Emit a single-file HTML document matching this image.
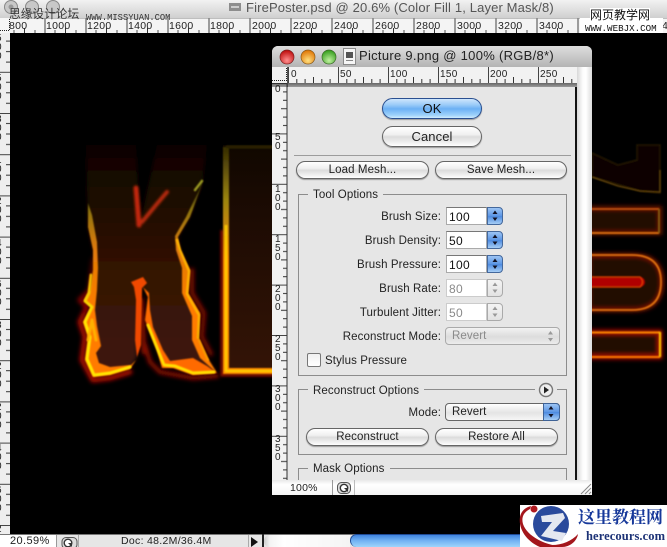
<!DOCTYPE html>
<html><head><meta charset="utf-8">
<style>
html,body{margin:0;padding:0;background:#000}
#p{position:relative;width:667px;height:547px;overflow:hidden;background:#000;font-family:"Liberation Sans","Noto Sans CJK SC",sans-serif;color:#222;font-size:11.5px}
#p div,#p span.a{position:absolute;box-sizing:border-box}
.t{white-space:nowrap;letter-spacing:.1px;line-height:14px}
.r{text-align:right;left:290px;width:151px}
.btn{border:1px solid #666;border-radius:10px;background:linear-gradient(#fff 0,#f0f0f0 40%,#dcdcdc 52%,#f2f2f2 85%,#fff 100%);text-align:center;letter-spacing:.1px;color:#222;box-shadow:0 1px 1px #999;padding-top:1px}
.inp{left:446px;width:41px;height:18px;background:#fff;border:1px solid #aaa;border-top-color:#777;padding-left:2px;line-height:18px;font-size:12px;letter-spacing:.3px;color:#111}
.sp{left:487px;width:16px;height:18px;border-radius:0 4px 4px 0;border:1px solid #44689c;background:linear-gradient(#9cc4f4,#5c96e4 50%,#4c8ae0 52%,#a6cdf5);color:#123;}
.sp.d{border-color:#aaa;background:linear-gradient(#f4f4f4,#e2e2e2)}
.box{left:298px;width:269px;border:1px solid #8c8c8c}
.leg{background:#e6e6e6;padding:0 5px;height:14px;line-height:14px;letter-spacing:.1px;white-space:nowrap}
svg{position:absolute;overflow:visible}
</style></head><body><div id="p">

<!-- canvas artwork -->
<svg style="left:0;top:0" width="667" height="547" viewBox="0 0 667 547">
<defs>
<filter id="b05" filterUnits="userSpaceOnUse" x="0" y="0" width="667" height="547"><feGaussianBlur stdDeviation=".8"/></filter>
<filter id="b1" filterUnits="userSpaceOnUse" x="0" y="0" width="667" height="547"><feGaussianBlur stdDeviation="1.2"/></filter>
<filter id="b2" filterUnits="userSpaceOnUse" x="0" y="0" width="667" height="547"><feGaussianBlur stdDeviation="2.2"/></filter>
<linearGradient id="body" gradientUnits="userSpaceOnUse" x1="0" y1="145" x2="0" y2="375"><stop offset="0" stop-color="#0e0401"/><stop offset=".25" stop-color="#1e0a03"/><stop offset=".55" stop-color="#341306"/><stop offset="1" stop-color="#401808"/></linearGradient>
<linearGradient id="fl" gradientUnits="userSpaceOnUse" x1="0" y1="175" x2="0" y2="310"><stop offset="0" stop-color="#6a5a08" stop-opacity="0"/><stop offset=".25" stop-color="#8a7410"/><stop offset=".55" stop-color="#e07a08"/><stop offset="1" stop-color="#ff7c00"/></linearGradient>
<linearGradient id="yl" gradientUnits="userSpaceOnUse" x1="0" y1="225" x2="0" y2="320"><stop offset="0" stop-color="#c8a000" stop-opacity="0"/><stop offset=".5" stop-color="#f0b000"/><stop offset="1" stop-color="#ffe800"/></linearGradient>
<linearGradient id="rd" gradientUnits="userSpaceOnUse" x1="0" y1="230" x2="0" y2="320"><stop offset="0" stop-color="#700" stop-opacity="0"/><stop offset="1" stop-color="#b00800"/></linearGradient>
<linearGradient id="il" gradientUnits="userSpaceOnUse" x1="0" y1="150" x2="0" y2="260"><stop offset="0" stop-color="#3a3004"/><stop offset=".45" stop-color="#9a8410"/><stop offset="1" stop-color="#ff8c00"/></linearGradient>
<linearGradient id="ibody" gradientUnits="userSpaceOnUse" x1="0" y1="145" x2="0" y2="373"><stop offset="0" stop-color="#100700"/><stop offset=".3" stop-color="#1c0b03"/><stop offset="1" stop-color="#341406"/></linearGradient>
<pattern id="tickH" width="41" height="15" patternUnits="userSpaceOnUse" x="3.5" y="18"><rect x="0" y="0" width="1" height="15" fill="#444"/><rect x="20.5" y="10" width="1" height="5" fill="#333"/><rect x="10" y="12" width="1" height="3" fill="#555"/><rect x="31" y="12" width="1" height="3" fill="#555"/></pattern>
<pattern id="tickV" width="10" height="41.2" patternUnits="userSpaceOnUse" x="0" y="30.6"><rect x="0" y="0" width="10" height="1" fill="#444"/><rect x="6" y="10" width="4" height="1" fill="#333"/><rect x="6" y="20.5" width="4" height="1" fill="#333"/><rect x="6" y="31" width="4" height="1" fill="#333"/></pattern>
<pattern id="tickD" width="50" height="16" patternUnits="userSpaceOnUse" x="288" y="67"><rect x="0" y="0" width="1" height="16" fill="#444"/><rect x="8.3" y="12" width="1" height="4" fill="#333"/><rect x="16.6" y="12" width="1" height="4" fill="#333"/><rect x="25" y="10" width="1" height="6" fill="#333"/><rect x="33.3" y="12" width="1" height="4" fill="#333"/><rect x="41.6" y="12" width="1" height="4" fill="#333"/></pattern>
<pattern id="tickE" width="15" height="50.4" patternUnits="userSpaceOnUse" x="272" y="83"><rect x="0" y="0" width="15" height="1" fill="#444"/><rect x="11" y="8.4" width="4" height="1" fill="#333"/><rect x="11" y="16.8" width="4" height="1" fill="#333"/><rect x="9" y="25.2" width="6" height="1" fill="#333"/><rect x="11" y="33.6" width="4" height="1" fill="#333"/><rect x="11" y="42" width="4" height="1" fill="#333"/></pattern>
</defs>

<!-- K body -->
<path d="M86 145 L136 145 L140 225 L157 145 L207 145 L202 185 L190 217 L178 237 L180 250 L190 270 L188 293 L200 313 L198 337 L207 357 L217 373 L193 375 L173 368 L162 368 L157 350 L145 320 L148 297 L143 287 L140 285 L138 297 L137 357 L130 369 L110 375 L93 377 L85 360 L88 337 L83 322 L91 307 L84 300 L90 290 L93 270 L93 250 L88 227 Z" fill="url(#body)" filter="url(#b2)"/>

<!-- K outer red halo -->
<g fill="none" stroke-linejoin="round" stroke-linecap="round" filter="url(#b2)">
<path d="M93 260 L90 290 L80 300 L87 307 L80 322 L85 337 L82 360 L93 380 L110 378 L130 372" stroke="url(#rd)" stroke-width="5"/>
<path d="M145 345 L150 362 L160 372 L193 378 L217 376" stroke="#900800" stroke-width="4"/>
<path d="M192 270 L192 293 L204 313 L202 337 L211 354" stroke="#8a0800" stroke-width="4"/>
<path d="M141 300 L144 352" stroke="#8a0800" stroke-width="5"/>
</g>

<!-- K flames as filled shapes -->
<g filter="url(#b05)">
<path d="M88 203 L88 227 L93 250 L93 270 L90 290 L84 300 L91 307 L83 322 L88 337 L85 360 L93 377 L110 375 L130 369 L136 360 L131 365 L110 367 L99 363 L96 353 L101 346 L97 326 L95 310 L97 290 L98 268 L97 242 L92 215 Z" fill="url(#fl)"/>
<path d="M131 282 L143 277 L147 283 L142 288 L141 345 L137 357 L135 340 L136 300 L134 287 Z" fill="#f04a00"/>
<path d="M143 287 L148 297 L145 320 L157 350 L162 368 L173 368 L193 375 L217 373 L207 366 L193 358 L170 361 L163 350 L153 327 L150 310 L149 293 Z" fill="#ff6a00"/>
<path d="M217 373 L207 357 L198 337 L200 313 L188 293 L190 270 L180 250 L178 237 L190 217 L202 185 L207 160 L199 190 L186 217 L175 236 L176 250 L182 268 L182 293 L192 316 L192 340 L200 358 Z" fill="url(#fl)"/>
</g>
<!-- K yellow cores -->
<g fill="none" stroke-linejoin="round" stroke-linecap="round" filter="url(#b05)">
<path d="M91 275 L89 293 L85 301 L92 307 L85 322 L90 337 L87 359 L94 375 L110 373 L130 367" stroke="url(#yl)" stroke-width="3"/>
<path d="M88 340 L92 320 L96 340" stroke="#ffb000" stroke-width="3"/>
<path d="M148 325 L158 350 L164 365 L175 366 L193 373 L214 372" stroke="#ffe000" stroke-width="3"/>
<path d="M198 338 L199 315 L187 294 L189 271 L180 250 L177 240" stroke="#ffb400" stroke-width="2.400"/>
<path d="M199 340 L208 360" stroke="#ffa000" stroke-width="2"/>
<path d="M195 190 L202 181" stroke="#9a9a20" stroke-width="2.500"/>
</g>
<!-- V notch -->
<g fill="none" stroke-linecap="round" filter="url(#b1)">
<path d="M136 188 L139 225" stroke="#c42808" stroke-width="5"/>
<path d="M142 222 L156 205 L167 192" stroke="#b82a0a" stroke-width="4"/>
</g>

<!-- I letter -->
<rect x="223" y="145" width="52" height="228" fill="url(#ibody)"/>
<g fill="none">
<path d="M222 230 L222 375 L275 375" stroke="#8a0800" stroke-width="3" filter="url(#b1)"/>
<path d="M226 147 L226 371 L275 371" stroke="url(#il)" stroke-width="6" filter="url(#b05)"/>
<path d="M226 225 L226 371 L275 371" stroke="#ffd400" stroke-width="2.500" filter="url(#b05)" opacity=".9"/>
<path d="M226 147 L275 147" stroke="#2c2404" stroke-width="3" filter="url(#b05)"/>
</g>

<!-- right letters -->
<g fill="none">
<path d="M592 153 L618 165 L637 160 L637 145 L660 145 L660 193 L640 191 L592 177 Z" fill="#0d0602" stroke="#241804" stroke-width="1.500" filter="url(#b05)"/>
<path d="M592 177 L618 186 L640 191 L660 192 L660 170" stroke="#6a4a08" stroke-width="1.200" filter="url(#b05)"/>
<path d="M588 208 L660 208 L660 233 L588 233" fill="#210b02" stroke="#6a1400" stroke-width="4" filter="url(#b2)"/>
<path d="M588 209 L659 209" stroke="#c8580c" stroke-width="1.800" filter="url(#b05)"/>
<path d="M588 233 L659 233" stroke="#ea7a0c" stroke-width="1.800" filter="url(#b05)"/>
<path d="M659 209 L659 233" stroke="#8a6a10" stroke-width="1.600" filter="url(#b05)"/>
<path d="M588 255 L632 255 Q662 255 662 282 Q662 310 632 310 L588 310 Z" fill="#240c02" stroke="#7a1400" stroke-width="4" filter="url(#b2)"/>
<path d="M588 255 L632 255 Q661 255 661 282 Q661 310 632 310 L588 310" stroke="#e87810" stroke-width="1.800" filter="url(#b05)"/>
<path d="M588 282 L640 282" stroke="#b00600" stroke-width="10" stroke-linecap="round" filter="url(#b05)"/>
<path d="M588 277 L640 277 Q645 282 640 287 L588 287" stroke="#e04800" stroke-width="1.200" filter="url(#b05)"/>
<path d="M588 332 L660 332 L660 357 L588 357" fill="#240c02" stroke="#a01000" stroke-width="5" filter="url(#b2)"/>
<path d="M588 332.500 L660 332.500" stroke="#ff8a00" stroke-width="2" filter="url(#b05)"/>
<path d="M588 357 L660 357" stroke="#ff7c00" stroke-width="2" filter="url(#b05)"/>
<path d="M660 332 L660 357" stroke="#ffc800" stroke-width="2.200" filter="url(#b05)"/>
</g>

<!-- main rulers -->
<rect x="0" y="18" width="667" height="15" fill="#f4f4f4"/>
<rect x="0" y="18" width="667" height="15" fill="url(#tickH)"/>
<rect x="0" y="17.500" width="667" height="1" fill="#888"/>
<rect x="0" y="33" width="10" height="501" fill="#eee"/>
<rect x="0" y="33" width="10" height="501" fill="url(#tickV)"/>
<rect x="0" y="18" width="10" height="15" fill="#f6f6f6"/>
<path d="M0 30.500H9.500V19" stroke="#222" stroke-dasharray="1 1" fill="none"/>
<g font-family="Liberation Sans" font-size="10.500" fill="#222" letter-spacing=".3">
<text x="9" y="29">800</text><text x="46" y="29">1000</text><text x="87" y="29">1200</text><text x="128" y="29">1400</text><text x="169" y="29">1600</text><text x="210" y="29">1800</text><text x="252" y="29">2000</text><text x="293" y="29">2200</text><text x="334" y="29">2400</text><text x="375" y="29">2600</text><text x="416" y="29">2800</text><text x="457" y="29">3000</text><text x="498" y="29">3200</text><text x="539" y="29">3400</text><text x="580" y="29">3600</text><text x="621" y="29">3800</text><text x="662" y="29">4</text>
</g>
<g font-family="Liberation Sans" font-size="10" fill="#222">
<text x="-4" y="41">5</text><text x="-4" y="50">0</text><text x="-4" y="59">0</text>
<text x="-4" y="81">5</text><text x="-4" y="90">0</text><text x="-4" y="99">0</text>
<text x="-4" y="122">8</text><text x="-4" y="131">0</text><text x="-4" y="140">0</text>
<text x="-4" y="163">1</text><text x="-4" y="172">0</text><text x="-4" y="181">0</text>
<text x="-4" y="204">2</text><text x="-4" y="213">0</text><text x="-4" y="222">0</text>
<text x="-4" y="246">4</text><text x="-4" y="255">0</text><text x="-4" y="264">0</text>
<text x="-4" y="287">6</text><text x="-4" y="296">0</text><text x="-4" y="305">0</text>
<text x="-4" y="328">8</text><text x="-4" y="337">0</text><text x="-4" y="346">0</text>
<text x="-4" y="369">2</text><text x="-4" y="378">0</text><text x="-4" y="387">0</text>
<text x="-4" y="410">2</text><text x="-4" y="419">0</text><text x="-4" y="428">0</text>
<text x="-4" y="451">4</text><text x="-4" y="460">0</text><text x="-4" y="469">0</text>
<text x="-4" y="493">6</text><text x="-4" y="502">0</text><text x="-4" y="511">0</text>
<text x="-4" y="532">2</text>
</g>
</svg>

<!-- title bar -->
<div style="left:0;top:0;width:667px;height:18px;background:linear-gradient(#f2f2f2,#cfcfcf)"></div>
<svg style="left:0;top:0" width="260" height="18">
<g fill="#c8c8c8" stroke="#888"><circle cx="11" cy="7" r="6.500"/><circle cx="32" cy="7" r="6.500"/><circle cx="53" cy="7" r="6.500"/></g>
<circle cx="11" cy="7" r="2.500" fill="#999"/>
<rect x="229" y="3" width="12" height="8" fill="#8d8d8d"/><rect x="231" y="6" width="8" height="2" fill="#ccc"/>
</svg>
<div class="t" style="left:246px;top:0;font-size:13px;line-height:15px;color:#555;letter-spacing:.14px">FirePoster.psd @ 20.6% (Color Fill 1, Layer Mask/8)</div>
<div class="t" style="left:9px;top:7px;font-size:11.700px;color:#333;letter-spacing:0;line-height:15px">思缘设计论坛</div>
<div class="t" style="left:86px;top:13px;font-family:'Liberation Mono',monospace;font-size:8.800px;color:#333;letter-spacing:0;line-height:10px">WWW.MISSYUAN.COM</div>

<!-- web watermark -->
<div style="left:580px;top:18px;width:83px;height:15px;background:#fff"></div>
<div class="t" style="left:590px;top:8px;font-size:12px;color:#111;letter-spacing:0;line-height:14px;background:#fff;width:60px">网页教学网</div>
<div class="t" style="left:585px;top:24px;font-family:'Liberation Mono',monospace;font-size:9.200px;color:#111;letter-spacing:0;line-height:9px">WWW.WEBJX.COM</div>

<!-- dialog window -->
<div style="left:272px;top:46px;width:320px;height:449px;background:#e6e6e6;border-radius:6px 6px 0 0;overflow:hidden">
 <div style="left:0;top:0;width:320px;height:21px;background:linear-gradient(#dedede,#b4b4b4)"></div>
 <svg style="left:0;top:0" width="90" height="21">
  <defs><radialGradient id="rb" cx=".5" cy=".75" r=".7"><stop offset="0" stop-color="#ff9090"/><stop offset="1" stop-color="#c01010"/></radialGradient>
  <radialGradient id="yb" cx=".5" cy=".75" r=".7"><stop offset="0" stop-color="#ffe080"/><stop offset="1" stop-color="#e07808"/></radialGradient>
  <radialGradient id="gb" cx=".5" cy=".75" r=".7"><stop offset="0" stop-color="#c0f0a0"/><stop offset="1" stop-color="#38a020"/></radialGradient></defs>
  <circle cx="15" cy="11" r="7" fill="url(#rb)" stroke="#7a2020" stroke-width=".7"/>
  <circle cx="36" cy="11" r="7" fill="url(#yb)" stroke="#8a5a18" stroke-width=".7"/>
  <circle cx="57" cy="11" r="7" fill="url(#gb)" stroke="#3a6a28" stroke-width=".7"/>
  <rect x="71.500" y="2.500" width="12" height="16" fill="#f6f6f6" stroke="#777" stroke-width=".8"/><rect x="74" y="6" width="7" height="6" fill="#555"/><rect x="74" y="14" width="7" height="1" fill="#888"/>
 </svg>
 <div class="t" style="left:87px;top:2px;font-size:13px;line-height:16px;color:#222;letter-spacing:.29px">Picture 9.png @ 100% (RGB/8*)</div>

 <!-- dialog rulers -->
 <div style="left:0;top:21px;width:320px;height:16px;background:#f2f2f2"></div>
 <div style="left:0;top:37px;width:15px;height:397px;background:#f2f2f2"></div>
 <div style="left:0;top:37px;width:320px;height:4px;background:linear-gradient(#666,#9a9a9a)"></div>
 <div style="left:303px;top:41px;width:2px;height:393px;background:#111"></div>
 <div style="left:305px;top:21px;width:15px;height:413px;background:linear-gradient(90deg,#d8d8d8,#fdfdfd 40%,#fff 60%,#dcdcdc)"></div>
 <div style="left:0;top:434px;width:320px;height:15px;background:linear-gradient(#e8e8e8,#fff 30%,#f4f4f4)"></div>
 <div style="left:60px;top:434px;width:1px;height:15px;background:#999"></div>
 <div style="left:82px;top:434px;width:1px;height:15px;background:#bbb"></div>
</div>
<svg style="left:272px;top:67px" width="320" height="413" viewBox="272 67 320 413">
 <rect x="288" y="67" width="290" height="16" fill="url(#tickD)"/>
 <rect x="272" y="83" width="15" height="397" fill="url(#tickE)"/>
 <rect x="272" y="83" width="15" height="1" fill="#333"/>
 <path d="M272 80.500H286.500V67" stroke="#222" stroke-dasharray="1 1" fill="none"/>
 <rect x="287" y="67" width="1" height="20" fill="#555"/>
 <rect x="286.500" y="83" width="1" height="397" fill="#333"/>
 <g font-family="Liberation Sans" font-size="10" fill="#222" letter-spacing=".3">
 <text x="291" y="77">0</text><text x="340" y="77">50</text><text x="390" y="77">100</text><text x="440" y="77">150</text><text x="490" y="77">200</text><text x="540" y="77">250</text></g>
 <g font-family="Liberation Sans" font-size="10" fill="#222">
 <text x="275" y="92">0</text>
 <text x="275" y="140">5</text><text x="275" y="149">0</text>
 <text x="275" y="192">1</text><text x="275" y="201">0</text><text x="275" y="210">0</text>
 <text x="275" y="242">1</text><text x="275" y="251">5</text><text x="275" y="260">0</text>
 <text x="275" y="292">2</text><text x="275" y="301">0</text><text x="275" y="310">0</text>
 <text x="275" y="342">2</text><text x="275" y="351">5</text><text x="275" y="360">0</text>
 <text x="275" y="392">3</text><text x="275" y="401">0</text><text x="275" y="410">0</text>
 <text x="275" y="442">3</text><text x="275" y="451">5</text><text x="275" y="460">0</text>
 </g>
</svg>

<!-- buttons top -->
<div class="btn" style="left:382px;top:98px;width:100px;height:21px;border:1px solid #2a4f90;background:linear-gradient(#cfe6fc 0,#9cccf8 30%,#6cb0f4 52%,#9ed2fb 85%,#d0ecfd 100%);font-size:13px;line-height:18px;border-radius:11px;color:#111">OK</div>
<div class="btn" style="left:382px;top:126px;width:100px;height:21px;font-size:13px;line-height:18px;border-radius:11px">Cancel</div>
<div style="left:294px;top:154.500px;width:277px;height:1px;background:#9c9c9c"></div>
<div class="btn" style="left:296px;top:161px;width:133px;height:18px;line-height:15px">Load Mesh...</div>
<div class="btn" style="left:435px;top:161px;width:132px;height:18px;line-height:15px">Save Mesh...</div>

<!-- tool options -->
<div class="box" style="top:194px;height:182px"></div>
<div class="leg" style="left:308px;top:188px">Tool Options</div>

<div class="t r" style="top:210px">Brush Size:</div>
<div class="inp" style="top:207px">100</div><div class="sp" style="top:207px"></div>
<div class="t r" style="top:234px">Brush Density:</div>
<div class="inp" style="top:231px">50</div><div class="sp" style="top:231px"></div>
<div class="t r" style="top:258px">Brush Pressure:</div>
<div class="inp" style="top:255px">100</div><div class="sp" style="top:255px"></div>
<div class="t r" style="top:282px">Brush Rate:</div>
<div class="inp" style="top:279px;color:#8a8a8a;border-color:#ccc">80</div><div class="sp d" style="top:279px"></div>
<div class="t r" style="top:306px">Turbulent Jitter:</div>
<div class="inp" style="top:303px;color:#8a8a8a;border-color:#ccc">50</div><div class="sp d" style="top:303px"></div>
<div class="t r" style="top:330px">Reconstruct Mode:</div>
<div style="left:445px;top:327px;width:115px;height:18px;border:1px solid #aaa;border-radius:4px;background:linear-gradient(#f2f2f2,#dcdcdc 55%,#ececec);color:#8a8a8a;padding-left:6px;line-height:17px;letter-spacing:.1px">Revert</div>
<div style="left:307px;top:353px;width:14px;height:14px;border:1px solid #777;border-radius:2px;background:linear-gradient(#f0f0f0,#fff)"></div>
<div class="t" style="left:325px;top:354px">Stylus Pressure</div>

<!-- reconstruct options -->
<div class="box" style="top:389px;height:66px"></div>
<div class="leg" style="left:308px;top:384px">Reconstruct Options</div>
<div style="left:535px;top:383px;width:22px;height:14px;background:#e6e6e6"></div>
<div class="t r" style="top:406px">Mode:</div>
<div style="left:445px;top:403px;width:115px;height:18px;border:1px solid #666;border-radius:4px;background:linear-gradient(#fff,#e4e4e4 55%,#f6f6f6);padding-left:6px;line-height:17px;letter-spacing:.1px">Revert</div>
<div style="left:543px;top:403px;width:17px;height:18px;border:1px solid #3e6296;border-radius:0 4px 4px 0;background:linear-gradient(#9cc4f4,#5c96e4 50%,#4c8ae0 52%,#a6cdf5)"></div>
<div class="btn" style="left:306px;top:428px;width:123px;height:18px;line-height:15px">Reconstruct</div>
<div class="btn" style="left:435px;top:428px;width:123px;height:18px;line-height:15px">Restore All</div>

<!-- mask options -->
<div class="box" style="top:468px;height:12px;border-bottom:0"></div>
<div class="leg" style="left:308px;top:462px">Mask Options</div>

<!-- small glyphs over controls -->
<svg style="left:0;top:0" width="667" height="547">
 <g fill="#112"><path d="M495 210.500l2.500 3.500h-5zM495 221l2.500-3.500h-5zM495 234.500l2.500 3.500h-5zM495 245l2.500-3.500h-5zM495 258.500l2.500 3.500h-5zM495 269l2.500-3.500h-5z"/></g>
 <g fill="#999"><path d="M495 282.500l2.500 3.500h-5zM495 293l2.500-3.500h-5zM495 306.500l2.500 3.500h-5zM495 317l2.500-3.500h-5zM550.500 331l2.500 3.500h-5zM550.500 341.500l2.500-3.500h-5z"/></g>
 <path d="M551 406l2.500 3.500h-5zM551 417.500l2.500-3.500h-5z" fill="#112"/>
 <circle cx="546" cy="390" r="6.500" fill="#eee" stroke="#777" stroke-width="1.400"/><path d="M544 386.500l5 3.500-5 3.500z" fill="#222"/>
 <!-- dialog status icon -->
 <rect x="337.500" y="482.500" width="13" height="11" rx="4" fill="#ddd" stroke="#555"/><circle cx="344" cy="488" r="3.700" fill="#fff" stroke="#333" stroke-width="1.400"/><path d="M344 488h4v4z" fill="#333"/>
 <!-- resize grip -->
 <path d="M581 494l10-10M585 494l6-6M589 494l2-2" stroke="#888" fill="none"/>
</svg>
<div class="t" style="left:290px;top:481px;font-size:10.500px;letter-spacing:.2px">100%</div>

<!-- bottom status bar -->
<div style="left:0;top:534px;width:667px;height:13px;background:#e6e6e6;border-top:1px solid #777"></div>
<div style="left:0;top:535px;width:56px;height:12px;background:#fff"></div>
<div style="left:56px;top:535px;width:1px;height:12px;background:#999"></div>
<div style="left:78px;top:535px;width:1px;height:12px;background:#aaa"></div>
<div class="t" style="left:10px;top:535px;font-size:11px;letter-spacing:.4px;line-height:13px">20.59%</div>
<div class="t" style="left:121px;top:534px;font-size:10.500px;letter-spacing:.3px;line-height:14px">Doc: 48.2M/36.4M</div>
<div style="left:248px;top:535px;width:1px;height:12px;background:#aaa"></div>
<div style="left:262px;top:534px;width:2px;height:13px;background:#222"></div>
<div style="left:264px;top:535px;width:86px;height:12px;background:linear-gradient(90deg,#ccc,#f4f4f4 6px,#fff 20px,#f4f4f4);border-radius:6px 0 0 6px"></div>
<div style="left:350px;top:534px;width:180px;height:13px;border:1px solid #1f4a94;border-bottom:0;border-radius:7px 0 0 7px;background:linear-gradient(#3f83dd,#6fb0f2 45%,#9ed4fb)"></div>
<svg style="left:0;top:0" width="667" height="547">
 <rect x="62" y="537.500" width="15" height="11" rx="4" fill="#ddd" stroke="#555"/><circle cx="68" cy="543" r="3.800" fill="#fff" stroke="#333" stroke-width="1.400"/><path d="M68 543h4v4z" fill="#333"/>
 <path d="M251 537l7 5-7 5z" fill="#111"/>
</svg>

<!-- logo -->
<div style="left:520px;top:505px;width:147px;height:42px;background:#fff"></div>
<svg style="left:520px;top:504px" width="147" height="43" viewBox="520 504 147 43">
 <path d="M530 509 C524 512 521 517 523 524 C527 536 545 546 566 547 L540 547 C528 542 518 530 520 517 C521 511 526 507 531 506 Z" fill="#a4161c"/>
 <circle cx="534" cy="509" r="3.500" fill="#b01a20"/>
 <circle cx="551" cy="524" r="18" fill="#2a4a9c"/>
 <path d="M541 516 L563 513 L565 518 L553 531 L566 533 L562 541 L541 536 L552 522 L542 522 Z" fill="#e4e7f0"/>
 <path d="M552 545 C562 545 572 541 578 534 C577 541 570 547 562 547 L552 547 Z" fill="#a4161c"/>
</svg>
<div class="t" style="left:578px;top:504px;font-family:'Noto Serif CJK SC','Liberation Serif',serif;font-size:17px;font-weight:700;color:#16389a;letter-spacing:0;line-height:24px">这里教程网</div>
<div class="t" style="left:586px;top:529px;font-family:'Liberation Serif',serif;font-size:12.500px;font-weight:700;color:#1c3276;letter-spacing:.1px;line-height:14px">herecours.com</div>

</div></body></html>
